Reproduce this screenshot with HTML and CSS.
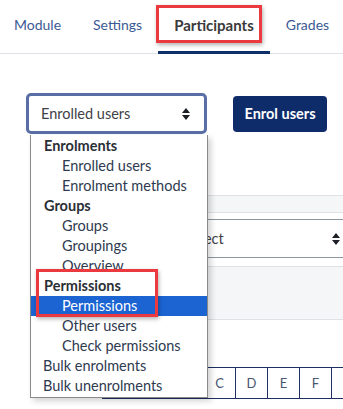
FILE: index.html
```html
<!DOCTYPE html>
<html lang="en">
<head>
    <meta charset="UTF-8">
    <meta name="viewport" content="width=device-width, initial-scale=1.0">
    <title>Participants</title>
    <link rel="stylesheet" href="styles.css">
</head>
<body>
    <nav class="tabs">
        <a class="tab">Module</a>
        <a class="tab">Settings</a>
        <a class="tab active">Participants</a>
        <a class="tab">Grades</a>
    </nav>

    <main class="page">
        <div class="toolbar">
            <div class="select-wrap">
                <div class="jump-select">
                    <span>Enrolled users</span>
                    <svg class="caret" width="8" height="12" viewBox="0 0 8 12"><path d="M4 0 L8 5 H0 Z M4 12 L8 7 H0 Z" fill="#1d2125"/></svg>
                </div>

                <!-- open list of the select -->
                <ul class="jump-menu">
                    <li class="group">Enrolments</li>
                    <li class="opt">Enrolled users</li>
                    <li class="opt">Enrolment methods</li>
                    <li class="group">Groups</li>
                    <li class="opt">Groups</li>
                    <li class="opt">Groupings</li>
                    <li class="opt">Overview</li>
                    <li class="group">Permissions</li>
                    <li class="opt selected">Permissions</li>
                    <li class="opt">Other users</li>
                    <li class="opt">Check permissions</li>
                    <li class="plain">Bulk enrolments</li>
                    <li class="plain">Bulk unenrolments</li>
                    <li class="highlight-box"></li>
                </ul>
            </div>
            <button class="btn-primary">Enrol users</button>
        </div>

        <div class="filter">
            <div class="filter-head"></div>
            <div class="filter-select">
                <span>Select</span>
                <svg class="caret" width="8" height="12" viewBox="0 0 8 12"><path d="M4 0 L8 5 H0 Z M4 12 L8 7 H0 Z" fill="#1d2125"/></svg>
            </div>
            <div class="filter-body"></div>
        </div>

        <!-- first cells sit under the open list -->
        <div class="initials">
            <span class="cell current"></span>
            <span class="cell"></span>
            <span class="cell"></span>
            <span class="cell">C</span>
            <span class="cell">D</span>
            <span class="cell">E</span>
            <span class="cell">F</span>
            <span class="cell"></span>
        </div>
    </main>
</body>
</html>
```

FILE: styles.css
```css
body {
    font-family: 'Lato', 'Open Sans', sans-serif;
    margin: 0;
    padding: 0;
    background: #ffffff;
    color: #1d2125;
    overflow: hidden;
    width: 343px;
    height: 409px;
}

/* Tabs */
.tabs {
    display: flex;
    height: 53px;
    border-bottom: 1px solid #dee2e6;
    margin-left: -2px;
}
.tab {
    position: relative;
    display: flex;
    align-items: center;
    padding: 0 16px;
    font-size: 14px;
    color: #3c5a94;
    margin-top: -4px;
}
.tab.active {
    color: #3a3a3a;
    font-size: 15px;
    font-weight: bold;
}
.tab.active::before {
    content: "";
    position: absolute;
    left: 0;
    right: 0;
    bottom: -1px;
    height: 3px;
    background: #0f2f6b;
}
.tab.active::after {
    content: "";
    position: absolute;
    left: -2px;
    right: 8px;
    top: 9px;
    height: 32px;
    border: 3px solid #ea3a40;
    box-shadow: 1px 2px 4px rgba(0, 0, 0, 0.3);
}

/* Toolbar */
.toolbar {
    display: flex;
    align-items: center;
    margin-top: 39px;
    padding-left: 26px;
}
.select-wrap {
    position: relative;
}
.jump-select {
    box-sizing: border-box;
    width: 181px;
    height: 41px;
    border: 3px solid #586ea4;
    border-radius: 5px;
    display: flex;
    align-items: center;
    justify-content: space-between;
    padding: 0 14px 0 12px;
    font-size: 14.5px;
    color: #3d4146;
}
.btn-primary {
    margin-left: 26px;
    height: 36px;
    width: 94px;
    border: none;
    border-radius: 4px;
    background: #0f2c6a;
    color: #ffffff;
    font-family: inherit;
    font-size: 14.5px;
    font-weight: bold;
}

/* Open list */
.jump-menu {
    position: absolute;
    left: 4px;
    top: 42px;
    width: 176px;
    margin: 0;
    padding: 1px 0;
    list-style: none;
    background: #ffffff;
    border: 1px solid #8a8a8a;
    border-top: none;
    box-shadow: 3px 3px 6px rgba(0, 0, 0, 0.18);
    z-index: 2;
    font-size: 14.5px;
}
.jump-menu li {
    height: 20px;
    line-height: 20px;
    white-space: nowrap;
    color: #2e3a50;
}
.jump-menu .group {
    padding-left: 13px;
    font-weight: bold;
    color: #2b2f36;
}
.jump-menu .opt {
    padding-left: 31px;
}
.jump-menu .plain {
    padding-left: 12px;
}
.jump-menu .selected {
    background: #1b64d2;
    color: #ffffff;
}
.jump-menu .highlight-box {
    position: absolute;
    left: 5px;
    top: 134px;
    width: 116px;
    height: 42px;
    border: 3px solid #ea3a40;
    box-shadow: 1px 2px 4px rgba(0, 0, 0, 0.3);
}

/* Filter area behind the list */
.filter {
    margin-top: 61px;
    margin-left: 40px;
}
.filter-head {
    height: 16px;
    background: #f5f6f8;
    border-top: 1px solid #dee2e6;
    border-bottom: 1px solid #dee2e6;
}
.filter-select {
    box-sizing: border-box;
    margin: 6px 0 0 130px;
    width: 185px;
    height: 39px;
    border: 1px solid #8f959e;
    border-right: none;
    display: flex;
    align-items: center;
    justify-content: space-between;
    padding: 0 15px 0 14px;
    font-size: 14.5px;
    color: #3d4146;
}
.filter-body {
    margin-top: 8px;
    height: 52px;
    background: #f5f6f8;
    border-top: 1px solid #dee2e6;
    border-bottom: 1px solid #dee2e6;
}

/* Initials bar */
.initials {
    display: flex;
    margin-top: 47px;
    padding-left: 103px;
}
.cell {
    box-sizing: border-box;
    width: 33px;
    height: 32px;
    border: 1px solid #1d2f5e;
    margin-left: -1px;
    display: flex;
    align-items: center;
    justify-content: center;
    font-size: 13px;
    color: #4a5570;
    flex-shrink: 0;
}
.cell.current {
    width: 38px;
    background: #0f2c6a;
}
```
